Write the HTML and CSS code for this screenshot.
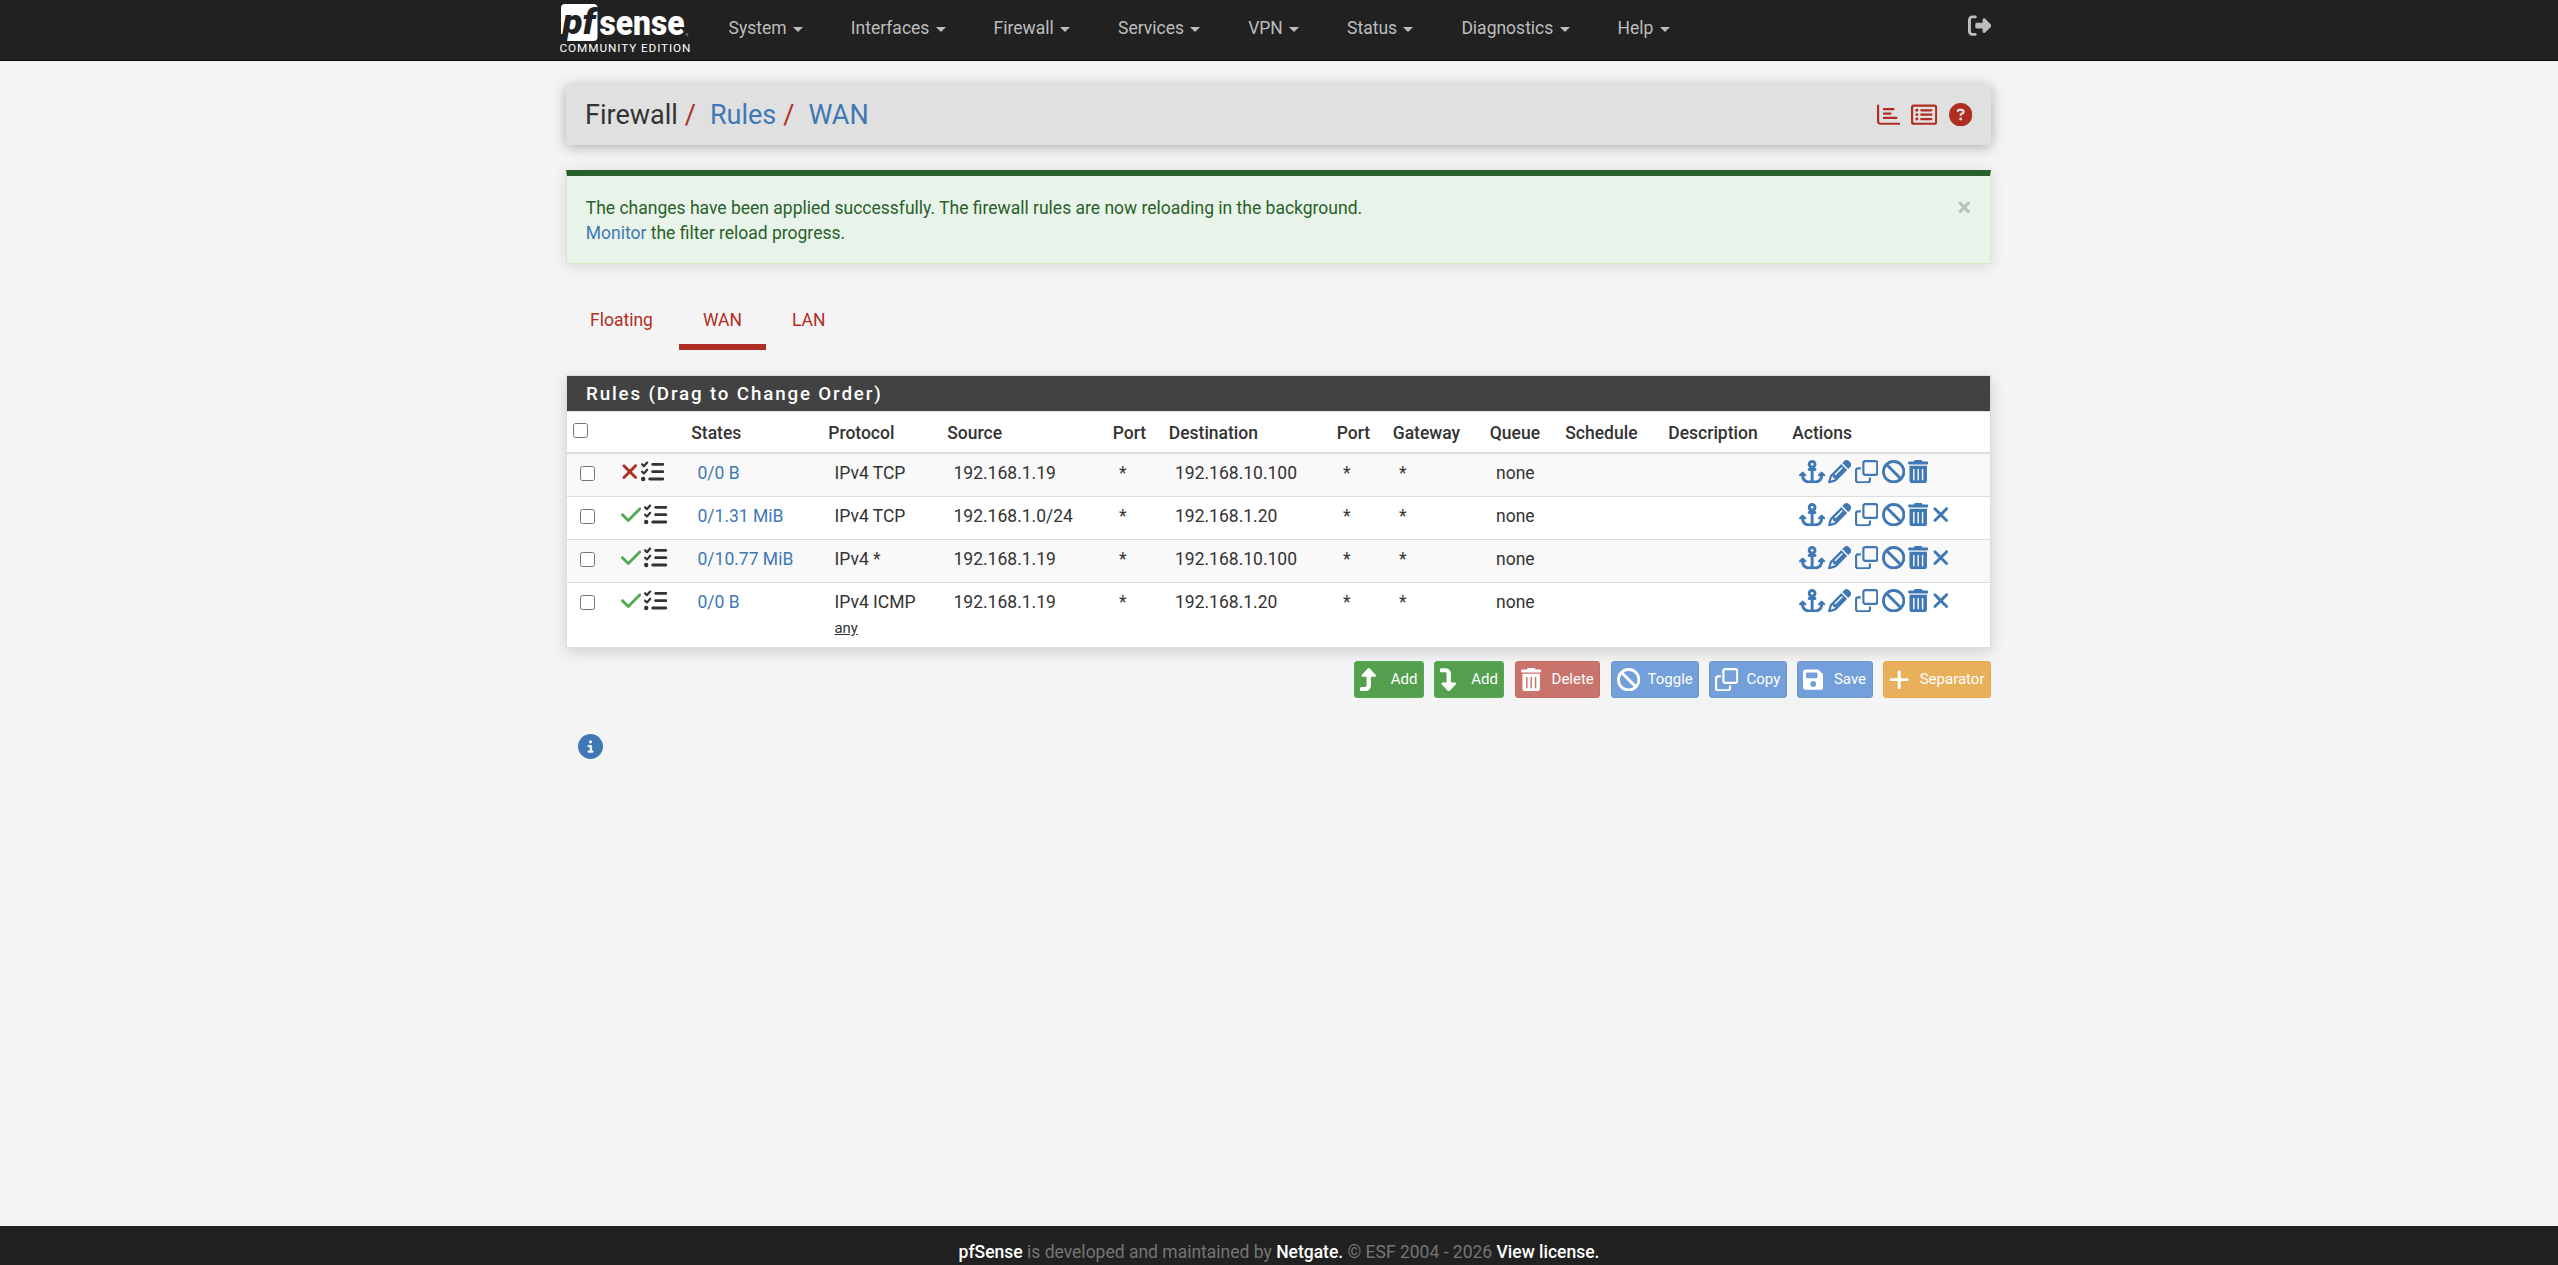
FILE: index.html
```html
<!DOCTYPE html>
<html lang="en">
<head>
    <meta charset="UTF-8">
    <meta name="viewport" content="width=device-width, initial-scale=1.0">
    <title>pfSense - Firewall: Rules: WAN</title>
    <link rel="stylesheet" href="styles.css">
</head>
<body>
    <svg class="sprite" xmlns="http://www.w3.org/2000/svg">
        <symbol id="i-anchor" viewBox="0 0 576 512"><path d="M320 96a32 32 0 1 1 -64 0 32 32 0 1 1 64 0zm21.1 80C367 158.8 384 129.4 384 96c0-53-43-96-96-96s-96 43-96 96c0 33.400 17 62.800 42.900 80H224c-17.700 0-32 14.300-32 32s14.300 32 32 32h32V448H208c-53 0-96-43-96-96v-6.100l7 7c9.400 9.400 24.600 9.400 33.900 0s9.400-24.600 0-33.900L97 263c-9.400-9.400-24.600-9.400-33.900 0L7 319c-9.400 9.400-9.400 24.600 0 33.900s24.600 9.400 33.900 0l7-7V352c0 88.400 71.600 160 160 160h160c88.400 0 160-71.600 160-160v-6.100l7 7c9.400 9.400 24.600 9.400 33.900 0s9.400-24.600 0-33.900l-56-56c-9.400-9.400-24.600-9.400-33.900 0l-56 56c-9.400 9.400-9.400 24.600 0 33.900s24.600 9.400 33.900 0l7-7V352c0 53-43 96-96 96H320V240h32c17.700 0 32-14.300 32-32s-14.300-32-32-32H341.100z"/></symbol>
        <symbol id="i-pencil" viewBox="0 0 512 512"><path d="M410.3 231l11.300-11.300-33.900-33.900-62.100-62.100L291.700 89.800l-11.300 11.300-22.600 22.600L58.600 322.900c-10.400 10.400-18 23.300-22.200 37.400L1 480.700c-2.500 8.400-.2 17.500 6.100 23.700s15.300 8.500 23.700 6.100l120.300-35.400c14.100-4.200 27-11.800 37.400-22.200L387.700 253.700 410.300 231zM160 399.400l-9.100 22.700c-4 3.100-8.500 5.400-13.300 6.900L59.400 452l23-78.100c1.400-4.900 3.800-9.400 6.900-13.300l22.700-9.100v32c0 8.800 7.200 16 16 16h32zM362.700 18.700L348.300 33.200 325.700 55.800 314.300 67.100l33.900 33.900 62.100 62.100 33.900 33.900 11.300-11.300 22.600-22.600 14.500-14.500c25-25 25-65.500 0-90.500L453.300 18.700c-25-25-65.500-25-90.500 0zm-47.400 168l-144 144c-6.200 6.200-16.400 6.200-22.600 0s-6.200-16.400 0-22.600l144-144c6.200-6.200 16.400-6.200 22.600 0s6.200 16.400 0 22.600z"/></symbol>
        <symbol id="i-clone" viewBox="0 0 512 512"><path d="M64 464H288c8.800 0 16-7.200 16-16V384h48v64c0 35.300-28.700 64-64 64H64c-35.300 0-64-28.700-64-64V224c0-35.300 28.700-64 64-64h64v48H64c-8.800 0-16 7.200-16 16V448c0 8.800 7.200 16 16 16zM224 304H448c8.800 0 16-7.200 16-16V64c0-8.800-7.200-16-16-16H224c-8.800 0-16 7.200-16 16V288c0 8.800 7.200 16 16 16zm-64-16V64c0-35.300 28.700-64 64-64H448c35.300 0 64 28.700 64 64V288c0 35.300-28.700 64-64 64H224c-35.300 0-64-28.700-64-64z"/></symbol>
        <symbol id="i-ban" viewBox="0 0 512 512"><path d="M367.200 412.500L99.500 144.800C77.100 176.100 64 214.500 64 256c0 106 86 192 192 192c41.500 0 79.900-13.100 111.200-35.500zm45.300-45.300C434.900 335.900 448 297.500 448 256c0-106-86-192-192-192c-41.500 0-79.900 13.100-111.200 35.500L412.500 367.200zM0 256a256 256 0 1 1 512 0A256 256 0 1 1 0 256z"/></symbol>
        <symbol id="i-trash" viewBox="0 0 448 512"><path d="M135.200 17.700C140.600 6.800 151.700 0 163.800 0H284.200c12.100 0 23.200 6.800 28.600 17.700L320 32h96c17.700 0 32 14.300 32 32s-14.300 32-32 32H32C14.300 96 0 81.700 0 64S14.300 32 32 32h96l7.200-14.300zM32 128H416V448c0 35.300-28.700 64-64 64H96c-35.300 0-64-28.700-64-64V128zm96 64c-8.800 0-16 7.200-16 16V432c0 8.800 7.200 16 16 16s16-7.200 16-16V208c0-8.800-7.200-16-16-16zm96 0c-8.800 0-16 7.200-16 16V432c0 8.800 7.200 16 16 16s16-7.200 16-16V208c0-8.800-7.200-16-16-16zm96 0c-8.800 0-16 7.200-16 16V432c0 8.800 7.200 16 16 16s16-7.200 16-16V208c0-8.800-7.200-16-16-16z"/></symbol>
        <symbol id="i-times" viewBox="0 0 384 512"><path d="M342.600 150.600c12.500-12.500 12.500-32.800 0-45.300s-32.800-12.500-45.300 0L192 210.700 86.600 105.400c-12.500-12.500-32.800-12.500-45.300 0s-12.500 32.800 0 45.300L146.700 256 41.400 361.400c-12.500 12.500-12.500 32.800 0 45.300s32.800 12.500 45.300 0L192 301.300 297.400 406.600c12.500 12.500 32.800 12.500 45.300 0s12.500-32.800 0-45.300L237.300 256 342.600 150.600z"/></symbol>
        <symbol id="i-check" viewBox="0 0 448 512"><path d="M438.600 105.400c12.500 12.500 12.500 32.800 0 45.300l-256 256c-12.500 12.500-32.800 12.500-45.300 0l-128-128c-12.500-12.500-12.500-32.800 0-45.300s32.800-12.500 45.300 0L160 338.700 393.400 105.400c12.500-12.500 32.800-12.500 45.300 0z"/></symbol>
        <symbol id="i-tasks" viewBox="0 0 512 512"><path d="M152.100 38.200c9.900 8.900 10.700 24 1.800 33.900l-72 80c-4.400 4.900-10.600 7.800-17.200 7.900s-12.900-2.400-17.600-7L7 113C-2.300 103.600-2.300 88.400 7 79s24.600-9.400 33.900 0l22.100 22.100 55.100-61.200c8.900-9.900 24-10.700 33.900-1.800zm0 160c9.900 8.900 10.700 24 1.800 33.900l-72 80c-4.400 4.900-10.600 7.800-17.200 7.900s-12.900-2.400-17.600-7L7 273c-9.400-9.400-9.400-24.600 0-33.900s24.600-9.400 33.900 0l22.100 22.100 55.100-61.200c8.900-9.900 24-10.700 33.900-1.800zM224 96c0-17.700 14.300-32 32-32H480c17.700 0 32 14.300 32 32s-14.300 32-32 32H256c-17.700 0-32-14.300-32-32zm0 160c0-17.700 14.300-32 32-32H480c17.700 0 32 14.300 32 32s-14.300 32-32 32H256c-17.700 0-32-14.300-32-32zM160 416c0-17.700 14.300-32 32-32H480c17.700 0 32 14.300 32 32s-14.300 32-32 32H192c-17.700 0-32-14.300-32-32zM48 368a48 48 0 1 1 0 96 48 48 0 1 1 0-96z"/></symbol>
        <symbol id="i-save" viewBox="0 0 448 512"><path d="M64 32C28.700 32 0 60.700 0 96V416c0 35.300 28.700 64 64 64H384c35.300 0 64-28.700 64-64V173.300c0-17-6.700-33.300-18.700-45.300L352 50.700C340 38.700 323.700 32 306.700 32H64zm0 96c0-17.700 14.300-32 32-32H288c17.700 0 32 14.300 32 32v64c0 17.700-14.300 32-32 32H96c-17.700 0-32-14.300-32-32V128zM224 288a64 64 0 1 1 0 128 64 64 0 1 1 0-128z"/></symbol>
        <symbol id="i-plus" viewBox="0 0 448 512"><path d="M256 80c0-17.700-14.300-32-32-32s-32 14.300-32 32V224H48c-17.700 0-32 14.300-32 32s14.300 32 32 32H192V432c0 17.700 14.300 32 32 32s32-14.300 32-32V288H400c17.700 0 32-14.300 32-32s-14.300-32-32-32H256V80z"/></symbol>
        <symbol id="i-turn-up" viewBox="0 0 384 512"><path d="M350 177.500c3.800-8.800 2-19-4.600-26l-136-144C204.900 2.700 198.600 0 192 0s-12.900 2.700-17.400 7.500l-136 144c-6.600 7-8.400 17.200-4.600 26s12.500 14.500 22 14.500h88l0 192c0 17.700-14.300 32-32 32H32c-17.700 0-32 14.300-32 32v32c0 17.700 14.300 32 32 32l80 0c70.700 0 128-57.300 128-128l0-192h88c9.600 0 18.200-5.700 22-14.500z"/></symbol>
        <symbol id="i-logout" viewBox="0 0 512 512"><path d="M377.900 105.900L500.700 228.700c7.200 7.200 11.300 17.100 11.300 27.300s-4.100 20.100-11.300 27.300L377.900 406.100c-6.400 6.400-15 9.900-24 9.900c-18.700 0-33.900-15.200-33.900-33.900l0-62.100-128 0c-17.700 0-32-14.300-32-32l0-64c0-17.700 14.300-32 32-32l128 0 0-62.100c0-18.700 15.200-33.900 33.900-33.900c9 0 17.600 3.600 24 9.900zM160 96L96 96c-17.700 0-32 14.300-32 32l0 256c0 17.700 14.300 32 32 32l64 0c17.700 0 32 14.300 32 32s-14.300 32-32 32l-64 0c-53 0-96-43-96-96L0 128C0 75 43 32 96 32l64 0c17.700 0 32 14.300 32 32s-14.300 32-32 32z"/></symbol>
        <symbol id="i-info" viewBox="0 0 512 512"><path d="M256 512A256 256 0 1 0 256 0a256 256 0 1 0 0 512zM216 336h24V272H216c-13.300 0-24-10.700-24-24s10.700-24 24-24h48c13.300 0 24 10.700 24 24v88h8c13.300 0 24 10.700 24 24s-10.700 24-24 24H216c-13.300 0-24-10.700-24-24s10.700-24 24-24zm40-208a32 32 0 1 1 0 64 32 32 0 1 1 0-64z"/></symbol>
        <symbol id="i-question" viewBox="0 0 512 512"><path d="M256 512A256 256 0 1 0 256 0a256 256 0 1 0 0 512zM169.800 165.300c7.900-22.300 29.100-37.300 52.800-37.300h58.300c34.900 0 63.100 28.300 63.100 63.100c0 22.600-12.100 43.500-31.700 54.800L280 264.400c-.2 13-10.900 23.600-24 23.600c-13.300 0-24-10.700-24-24V250.500c0-8.600 4.600-16.500 12.100-20.800l44.300-25.400c4.700-2.700 7.600-7.700 7.600-13.100c0-8.400-6.800-15.100-15.100-15.100H222.600c-3.400 0-6.400 2.100-7.500 5.300l-.4 1.200c-4.400 12.500-18.200 19-30.600 14.600s-19-18.200-14.600-30.600l.4-1.200zM224 352a32 32 0 1 1 64 0 32 32 0 1 1 -64 0z"/></symbol>
        <symbol id="i-chart" viewBox="0 0 512 512"><path d="M24 32c13.300 0 24 10.700 24 24V408c0 13.300 10.700 24 24 24H488c13.300 0 24 10.700 24 24s-10.700 24-24 24H72c-39.800 0-72-32.200-72-72V56C0 42.700 10.700 32 24 32zM128 136c0-13.300 10.700-24 24-24l208 0c13.300 0 24 10.700 24 24s-10.700 24-24 24l-208 0c-13.300 0-24-10.700-24-24zm24 72H296c13.300 0 24 10.700 24 24s-10.700 24-24 24H152c-13.300 0-24-10.700-24-24s10.700-24 24-24zm0 96H424c13.300 0 24 10.700 24 24s-10.700 24-24 24H152c-13.300 0-24-10.700-24-24s10.700-24 24-24z"/></symbol>
        <symbol id="i-list" viewBox="0 0 576 512"><rect x="24" y="56" width="528" height="400" rx="40" fill="none" stroke="currentColor" stroke-width="48"/><circle cx="128" cy="160" r="32"/><circle cx="128" cy="256" r="32"/><circle cx="128" cy="352" r="32"/><path d="M224 160H448M224 256H448M224 352H448" fill="none" stroke="currentColor" stroke-width="48" stroke-linecap="round"/></symbol>
    </svg>

    <nav class="navbar">
        <div class="container nav-inner">
            <a class="logo" href="#">
                <svg width="136" height="56" viewBox="0 0 136 56">
                    <rect x="2" y="4" width="36.500" height="37" rx="4" fill="#fff"/>
                    <path d="M2 34H7L5.500 41H2z" fill="#212121"/>
                    <text class="logo-pf" x="3.500" y="34" textLength="33" lengthAdjust="spacingAndGlyphs">pf</text>
                    <text class="logo-sense" x="40.500" y="34.500" textLength="85" lengthAdjust="spacingAndGlyphs">sense</text>
                    <circle cx="128" cy="34.500" r="1" fill="none" stroke="#aaa" stroke-width=".6"/>
                    <text class="logo-edition" x="0.500" y="52.300" textLength="131">COMMUNITY EDITION</text>
                </svg>
            </a>
            <ul class="nav">
                <li>System <b class="caret"></b></li>
                <li>Interfaces <b class="caret"></b></li>
                <li>Firewall <b class="caret"></b></li>
                <li>Services <b class="caret"></b></li>
                <li>VPN <b class="caret"></b></li>
                <li>Status <b class="caret"></b></li>
                <li>Diagnostics <b class="caret"></b></li>
                <li>Help <b class="caret"></b></li>
            </ul>
            <svg class="icon logout"><use href="#i-logout"/></svg>
        </div>
    </nav>

    <main class="container">
        <header class="page-header">
            <div class="breadcrumb">
                <span>Firewall</span><i>/</i><a href="#">Rules</a><i>/</i><a href="#">WAN</a>
            </div>
            <div class="context-links">
                <svg class="icon"><use href="#i-chart"/></svg>
                <svg class="icon w576"><use href="#i-list"/></svg>
                <svg class="icon"><use href="#i-question"/></svg>
            </div>
        </header>

        <div class="alert">
            <div>The changes have been applied successfully. The firewall rules are now reloading in the background.<br><a href="#">Monitor</a> the filter reload progress.</div>
            <button class="close">×</button>
        </div>

        <ul class="tabs">
            <li>Floating</li>
            <li class="active">WAN</li>
            <li>LAN</li>
        </ul>

        <section class="panel">
            <h2>Rules (Drag to Change Order)</h2>
            <table>
                <colgroup>
                    <col class="c-check"><col class="c-icons"><col class="c-states"><col class="c-proto"><col class="c-source"><col class="c-port"><col class="c-dest"><col class="c-port"><col class="c-gateway"><col class="c-queue"><col class="c-sched"><col class="c-desc"><col>
                </colgroup>
                <thead>
                    <tr>
                        <th><input type="checkbox"></th>
                        <th></th>
                        <th>States</th>
                        <th>Protocol</th>
                        <th>Source</th>
                        <th>Port</th>
                        <th>Destination</th>
                        <th>Port</th>
                        <th>Gateway</th>
                        <th>Queue</th>
                        <th>Schedule</th>
                        <th>Description</th>
                        <th>Actions</th>
                    </tr>
                </thead>
                <tbody id="rules"></tbody>
            </table>
        </section>

        <div class="buttons">
            <button class="btn success"><svg class="icon w384"><use href="#i-turn-up"/></svg>Add</button>
            <button class="btn success"><svg class="icon w384 flip"><use href="#i-turn-up"/></svg>Add</button>
            <button class="btn danger"><svg class="icon w448"><use href="#i-trash"/></svg>Delete</button>
            <button class="btn primary"><svg class="icon"><use href="#i-ban"/></svg>Toggle</button>
            <button class="btn primary"><svg class="icon"><use href="#i-clone"/></svg>Copy</button>
            <button class="btn primary"><svg class="icon w448"><use href="#i-save"/></svg>Save</button>
            <button class="btn warning"><svg class="icon w448"><use href="#i-plus"/></svg>Separator</button>
        </div>

        <svg class="icon info"><use href="#i-info"/></svg>
    </main>

    <footer class="footer">
        <a href="#">pfSense</a> is developed and maintained by <a href="#">Netgate.</a> © ESF 2004 - 2026 <a href="#">View license.</a>
    </footer>

    <script>
        const rules = [
            { pass: false, states: '0/0 B', proto: 'IPv4 TCP', src: '192.168.1.19', dst: '192.168.10.100' },
            { pass: true, states: '0/1.31 MiB', proto: 'IPv4 TCP', src: '192.168.1.0/24', dst: '192.168.1.20' },
            { pass: true, states: '0/10.77 MiB', proto: 'IPv4 *', src: '192.168.1.19', dst: '192.168.10.100' },
            { pass: true, states: '0/0 B', proto: 'IPv4 ICMP', sub: 'any', src: '192.168.1.19', dst: '192.168.1.20' }
        ];

        function icon(name, cls) {
            return `<svg class="icon ${cls || ''}"><use href="#i-${name}"/></svg>`;
        }

        document.getElementById('rules').innerHTML = rules.map(r => `
            <tr>
                <td><input type="checkbox"></td>
                <td><div class="icons">${r.pass ? icon('check', 'w448 pass') : icon('times', 'w384 block')}${icon('tasks')}</div></td>
                <td><a href="#">${r.states}</a></td>
                <td>${r.proto}${r.sub ? `<br><small>${r.sub}</small>` : ''}</td>
                <td>${r.src}</td>
                <td>*</td>
                <td>${r.dst}</td>
                <td>*</td>
                <td>*</td>
                <td>none</td>
                <td></td>
                <td></td>
                <td><div class="icons actions">${icon('anchor', 'w576')}${icon('pencil')}${icon('clone')}${icon('ban')}${icon('trash', 'w448')}${r.pass ? icon('times', 'w384') : ''}</div></td>
            </tr>`).join('');
    </script>
</body>
</html>
```
FILE: styles.css
```css
* {
    box-sizing: border-box;
}
html, body {
    height: 100%;
}
body {
    margin: 0;
    display: flex;
    flex-direction: column;
    font-family: Roboto, sans-serif;
    font-size: 17.5px;
    line-height: 25px;
    background-color: #f4f4f4;
    color: #333;
    overflow: hidden;
}
a {
    color: #3f78b5;
    text-decoration: none;
}
ul {
    list-style: none;
    margin: 0;
    padding: 0;
}
.sprite {
    display: none;
}
.container {
    width: 1426px;
    margin: 0 auto;
    padding-right: 1px;
}

/* icons */
.icon {
    display: block;
    width: 23.33px;
    height: 23.33px;
    fill: currentColor;
    flex: none;
}
.w384 { width: 17.5px; }
.w448 { width: 20.42px; }
.w576 { width: 26.25px; }
.flip { transform: scaleY(-1); }

/* navbar */
.navbar {
    height: 61px;
    flex: none;
    background-color: #212121;
    border-bottom: 1px solid #080808;
}
.nav-inner {
    display: flex;
    align-items: flex-start;
}
.logo {
    margin-left: -7px;
    height: 56px;
}
.logo-pf {
    font: italic 900 35px Roboto, sans-serif;
    fill: #212121;
}
.logo-sense {
    font: 900 35px Roboto, sans-serif;
    fill: #fff;
}
.logo-edition {
    font: 400 11.75px Roboto, sans-serif;
    fill: #fff;
}
.nav {
    display: flex;
    gap: 47.9px;
    margin-left: 33.5px;
    padding-top: 16px;
    color: #bdbdbd;
}
.nav li {
    white-space: nowrap;
}
.caret {
    display: inline-block;
    margin-left: 2px;
    vertical-align: middle;
    border-top: 5px solid;
    border-left: 5px solid transparent;
    border-right: 5px solid transparent;
}
.logout {
    margin: 14px 0 0 auto;
    color: #bdbdbd;
}

/* breadcrumb bar */
.page-header {
    display: flex;
    justify-content: space-between;
    align-items: center;
    height: 60px;
    margin-top: 24px;
    padding: 0 18.5px 0 19px;
    background-color: #e0e0e0;
    border-radius: 4px;
    box-shadow: 0 2px 14px rgba(0,0,0,0.3);
}
.breadcrumb {
    font-size: 27px;
}
.breadcrumb i {
    font-style: normal;
    color: #b02d22;
    margin: 0 14px 0 7px;
}
.context-links {
    display: flex;
    gap: 11.500px;
    color: #b02d22;
}

.alert {
    display: flex;
    justify-content: space-between;
    align-items: flex-start;
    margin-top: 25px;
    padding: 19.75px 18.75px 17px;
    background-color: #e8f4e9;
    border: 1px solid #d6e9c6;
    border-top: 6px solid #29602a;
    color: #29602a;
    box-shadow: 0 2px 14px rgba(0,0,0,0.12);
}
.close {
    margin-top: -2px;
    padding: 0;
    border: 0;
    background: none;
    font: 700 26.25px/26px Roboto, sans-serif;
    color: #000;
    opacity: 0.2;
}

/* interface tabs */
.tabs {
    display: flex;
    gap: 2px;
    margin-top: 32px;
    color: #b02d22;
}
.tabs li {
    height: 54px;
    padding: 12px 24px 0;
    border-bottom: 6px solid transparent;
}
.tabs .active {
    border-color: #b02d22;
}

/* rules table */
.panel {
    margin-top: 25px;
    background-color: #fff;
    border: 1px solid #ddd;
    box-shadow: 0 4px 14px rgba(0,0,0,0.15);
}
.panel h2 {
    height: 36px;
    margin: 0;
    padding-left: 19px;
    background-color: #424242;
    border-bottom: 1px solid #ddd;
    color: #fff;
    font-size: 18.75px;
    font-weight: 500;
    line-height: 37px;
    letter-spacing: 1.85px;
}
table {
    width: 100%;
    table-layout: fixed;
    border-collapse: separate;
    border-spacing: 0;
}
.c-check { width: 41px; }
.c-icons { width: 77px; }
.c-states { width: 137px; }
.c-proto { width: 119px; }
.c-source { width: 165.500px; }
.c-port { width: 56px; }
.c-dest { width: 168px; }
.c-gateway { width: 97px; }
.c-queue { width: 75.5px; }
.c-sched { width: 103px; }
.c-desc { width: 124px; }
th {
    height: 42px;
    padding: 9px 6.25px 6px;
    text-align: left;
    vertical-align: middle;
    font-weight: 500;
    border-bottom: 2px solid #ddd;
}
td {
    height: 43px;
    padding: 7.5px 0 4px 12.5px;
    vertical-align: top;
    white-space: nowrap;
    border-bottom: 1px solid #ddd;
}
tbody tr:nth-child(odd) {
    background-color: #f9f9f9;
}
tbody tr:last-child td {
    height: 64px;
    border-bottom: none;
}
td small {
    font-size: 14.9px;
    line-height: 24px;
    text-decoration: underline;
}
input[type="checkbox"] {
    display: block;
    width: 15px;
    height: 15px;
    margin: 0;
}
th input[type="checkbox"] {
    margin-top: -5px;
}
td input[type="checkbox"] {
    margin-top: 5px;
}
.icons {
    display: flex;
    gap: 3.4px;
    margin-top: -1px;
}
.actions { color: #3f78b5; }
.pass { color: #54a954; }
.block { color: #b02d22; }

/* action buttons */
.buttons {
    display: flex;
    justify-content: flex-end;
    gap: 10.2px;
    margin-top: 13px;
}
.btn {
    display: flex;
    align-items: center;
    height: 37px;
    padding: 0 5.500px 0 5px;
    border: 1px solid;
    border-radius: 3px;
    color: #fff;
    font: 15px Roboto, sans-serif;
}
.btn .icon {
    margin-right: 7.7px;
}
.btn .w448 { margin-right: 10.6px; }
.btn .w384 { margin-right: 13.5px; }
.success { background-color: #54a04f; border-color: #4cae4c; }
.danger { background-color: #c8746c; border-color: #c76a64; }
.primary { background-color: #739fda; border-color: #6f96c5; }
.warning { background-color: #e9b05c; border-color: #eaa84c; }

.info {
    width: 25px;
    height: 25px;
    margin: 36px 0 0 12px;
    color: #3f78b5;
}

.footer {
    margin-top: auto;
    flex: none;
    height: 39px;
    padding-top: 14px;
    background-color: #212121;
    color: #757575;
    text-align: center;
}
.footer a {
    color: #fff;
    font-weight: 500;
}
```
